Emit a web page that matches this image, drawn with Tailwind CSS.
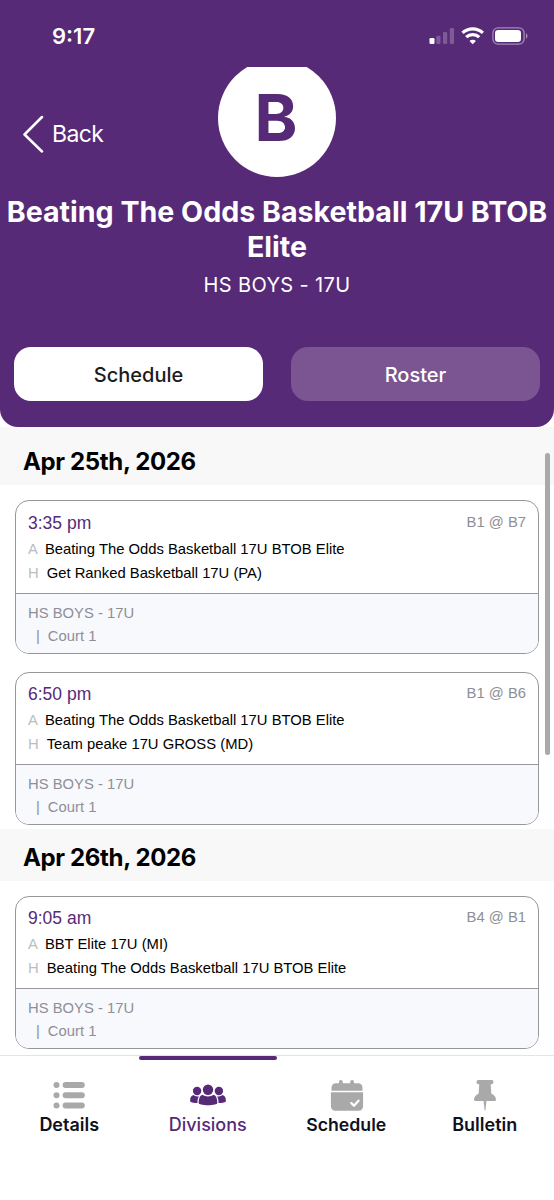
<!DOCTYPE html>
<html lang="en">
<head>
<meta charset="utf-8">
<title>Team Schedule</title>
<script src="https://cdn.jsdelivr.net/npm/@tailwindcss/browser@4"></script>
</head>
<body class="relative flex h-[1200px] w-[554px] flex-col overflow-hidden bg-white font-['Inter',sans-serif] whitespace-nowrap">

<header class="flex h-[427px] shrink-0 flex-col rounded-b-[18px] bg-[#572a78] text-white">
  <div class="flex h-[67px] shrink-0 items-center justify-between pt-[4px] pr-[26px] pl-[52px]">
    <span class="pt-px text-[22px] font-semibold">9:17</span>
    <div class="flex items-center">
      <svg class="h-[18px] w-[26px]" viewBox="0 0 26 18" fill="#fff">
        <rect x="0.5" y="11" width="5" height="6" rx="1.3"/>
        <g opacity=".23"><rect x="7.3" y="8.8" width="4.2" height="8.2" rx="1.2"/><rect x="14" y="5" width="4.2" height="12" rx="1.2"/><rect x="20.8" y="1" width="4.2" height="16" rx="1.2"/></g>
      </svg>
      <svg class="ml-1.5 h-[18px] w-6" viewBox="0 0 24 18" fill="none" stroke="#fff" stroke-width="3.2">
        <path d="M1.500 5.900a14.700 14.700 0 0 1 20.400 0"/>
        <path d="M5.200 10.200a9.300 9.300 0 0 1 13 0"/>
        <path d="M11.700 17.200l-3.200-3.200a4.600 4.600 0 0 1 6.400 0z" fill="#fff" stroke="none"/>
      </svg>
      <svg class="ml-[7px] h-[18px] w-9" viewBox="0 0 36 18" fill="none">
        <rect x=".9" y=".9" width="31.2" height="16.2" rx="5" stroke="#fff" stroke-opacity=".45" stroke-width="1.3"/>
        <rect x="3" y="3" width="26" height="12" rx="3.2" fill="#fff"/>
        <path d="M34 6.3c1.900.7 1.900 4.700 0 5.400z" fill="#fff" fill-opacity=".5"/>
      </svg>
    </div>
  </div>
  <div class="grid h-[111px] shrink-0 grid-cols-[218px_118px_218px] overflow-hidden">
    <div class="flex h-[133px] items-center pl-[22px]">
      <svg class="h-[38px] w-[22px]" viewBox="0 0 22 38" fill="none" stroke="#fff" stroke-width="2.5" stroke-linecap="round" stroke-linejoin="round"><path d="M20 2L2.5 19.5L20 36.500"/></svg>
      <span class="ml-2 pt-0.5 text-[23px] tracking-[-0.6px]">Back</span>
    </div>
    <div class="-mt-2 flex size-[118px] items-center justify-center rounded-full bg-white pr-0.5 text-[65px] font-bold text-[#572a78]">B</div>
  </div>
  <h1 class="mt-[16px] text-center text-[28.6px] leading-[35px] font-bold">Beating The Odds Basketball 17U BTOB<br>Elite</h1>
  <p class="mt-[7px] text-center text-[20px] leading-7 tracking-[.35px]">HS BOYS - 17U</p>
  <div class="mt-[48px] flex gap-7 px-3.5 text-[20px] font-medium">
    <div class="flex h-[54px] flex-1 items-center justify-center rounded-[17px] bg-white pt-0.5 text-[#1b1b1f]">Schedule</div>
    <div class="flex h-[54px] flex-1 items-center justify-center rounded-[17px] bg-[#7b5592] pt-0.5 text-white">Roster</div>
  </div>
</header>

<main class="h-[628px] shrink-0 overflow-hidden">
  <h2 class="flex h-[58px] items-center bg-[#f8f8f8] pt-3 pl-[23px] text-[24px] font-bold tracking-[-0.35px] text-black">Apr 25th, 2026</h2>

  <section class="flex flex-col gap-[18px] px-[15px] pt-[15px] pb-1 font-['Liberation_Sans',sans-serif] text-[14.8px]">
    <article class="h-[154px] overflow-hidden rounded-[14px] border border-[#96979b]">
      <div class="h-[93px] border-b border-[#96979b] px-3 pt-[9px]">
        <div class="flex h-[27px] justify-between text-[17.5px] leading-[26px] text-[#572a78]"><span>3:35 pm</span><span class="text-[14.8px] leading-6 text-[#8e8f96]">B1 @ B7</span></div>
        <div class="flex h-6 items-center"><span class="mr-[7px] text-[#bcbcbe]">A</span><span class="text-black">Beating The Odds Basketball 17U BTOB Elite</span></div>
        <div class="flex h-6 items-center"><span class="mr-2 text-[#bcbcbe]">H</span><span class="text-black">Get Ranked Basketball 17U (PA)</span></div>
      </div>
      <div class="h-full bg-[#f8f9fd] px-3 pt-2 leading-[23px] text-[#8e8f96]"><p>HS BOYS - 17U</p><p class="flex gap-2 pl-2"><span>|</span><span>Court 1</span></p></div>
    </article>
    <article class="h-[153px] overflow-hidden rounded-[14px] border border-[#96979b]">
      <div class="h-[92px] border-b border-[#96979b] px-3 pt-2">
        <div class="flex h-[27px] justify-between text-[17.5px] leading-[26px] text-[#572a78]"><span>6:50 pm</span><span class="text-[14.8px] leading-6 text-[#8e8f96]">B1 @ B6</span></div>
        <div class="flex h-6 items-center"><span class="mr-[7px] text-[#bcbcbe]">A</span><span class="text-black">Beating The Odds Basketball 17U BTOB Elite</span></div>
        <div class="flex h-6 items-center"><span class="mr-2 text-[#bcbcbe]">H</span><span class="text-black">Team peake 17U GROSS (MD)</span></div>
      </div>
      <div class="h-full bg-[#f8f9fd] px-3 pt-2 leading-[23px] text-[#8e8f96]"><p>HS BOYS - 17U</p><p class="flex gap-2 pl-2"><span>|</span><span>Court 1</span></p></div>
    </article>
  </section>

  <h2 class="flex h-[52px] items-center bg-[#f8f8f8] pt-1.5 pl-[23px] text-[24px] font-bold tracking-[-0.35px] text-black">Apr 26th, 2026</h2>

  <section class="px-[15px] pt-[15px] font-['Liberation_Sans',sans-serif] text-[14.8px]">
    <article class="h-[153px] overflow-hidden rounded-[14px] border border-[#96979b]">
      <div class="h-[92px] border-b border-[#96979b] px-3 pt-2">
        <div class="flex h-[27px] justify-between text-[17.5px] leading-[26px] text-[#572a78]"><span>9:05 am</span><span class="text-[14.8px] leading-6 text-[#8e8f96]">B4 @ B1</span></div>
        <div class="flex h-6 items-center"><span class="mr-[7px] text-[#bcbcbe]">A</span><span class="text-black">BBT Elite 17U (MI)</span></div>
        <div class="flex h-6 items-center"><span class="mr-2 text-[#bcbcbe]">H</span><span class="text-black">Beating The Odds Basketball 17U BTOB Elite</span></div>
      </div>
      <div class="h-full bg-[#f8f9fd] px-3 pt-2 leading-[23px] text-[#8e8f96]"><p>HS BOYS - 17U</p><p class="flex gap-2 pl-2"><span>|</span><span>Court 1</span></p></div>
    </article>
  </section>
</main>

<div class="absolute top-[453px] right-[4.5px] h-[302px] w-[4.5px] rounded-full bg-[#a9a9a9]"></div>

<nav class="grid flex-1 grid-cols-4 border-t border-[#e4e4e6] bg-white text-[18px] font-semibold text-[#0f1020]">
  <div class="flex flex-col items-center pt-6">
    <svg class="h-[30px] w-8" viewBox="0 0 32 30" fill="#a9a9a9"><circle cx="3.500" cy="5" r="3"/><circle cx="3.500" cy="15.300" r="3"/><circle cx="3.500" cy="25.600" r="3"/><rect x="9.600" y="2" width="22.200" height="6" rx="3"/><rect x="9.600" y="12.300" width="22.200" height="6" rx="3"/><rect x="9.600" y="22.600" width="22.200" height="6" rx="3"/></svg>
    <span class="mt-px leading-7">Details</span>
  </div>
  <div class="relative flex flex-col items-center pt-6 font-medium text-[#572a78]">
    <div class="absolute inset-x-0 top-0 h-1 rounded-full bg-[#572a78]"></div>
    <svg class="h-[30px] w-9" viewBox="0 0 36 30" fill="#572a78">
      <circle cx="18" cy="9.700" r="5.200"/><circle cx="7.100" cy="11" r="4.200"/><circle cx="28.900" cy="11" r="4.200"/>
      <path d="M12.400 14.800C14 16.200 16 16.400 18 16.400s4-.2 5.600-1.600c2.500.8 3.700 3.900 3.700 8.200 0 1.300-3.900 2.200-9.300 2.200s-9.300-.9-9.300-2.200c0-4.300 1.200-7.400 3.700-8.200z"/>
      <path d="M3.400 15.100c1.400 1.300 3.700 1.600 5.600 1.100-1.200 1.800-1.600 4.100-1.500 6.800-2.900 0-6-.4-7.200-1.300-.6-3.100.6-6 3.100-6.600zM32.600 15.100c-1.400 1.300-3.700 1.600-5.600 1.100 1.200 1.800 1.600 4.100 1.500 6.800 2.900 0 6-.4 7.200-1.300.6-3.100-.6-6-3.100-6.600z"/>
    </svg>
    <span class="mt-px leading-7">Divisions</span>
  </div>
  <div class="flex flex-col items-center pt-6">
    <svg class="ml-[2px] h-[31px] w-[34px]" viewBox="0 0 34 31" fill="#a9a9a9">
      <path d="M1.500 10.800V8c0-3 1.600-4.700 4.600-4.700H9V1.900a1.900 1.900 0 0 1 3.800 0v1.400h7.400V1.900a1.900 1.900 0 0 1 3.800 0v1.400h3.900c3 0 4.600 1.700 4.600 4.700v2.800z"/>
      <path d="M.9 12.300h32.200V26c0 3-1.700 4.800-4.700 4.800H5.600c-3 0-4.700-1.800-4.700-4.800z"/>
      <path d="M21.300 23.100l2.700 2.600 4.500-5" fill="none" stroke="#fff" stroke-width="2.300" stroke-linecap="round" stroke-linejoin="round"/>
    </svg>
    <span class="text-[17.700px] leading-7">Schedule</span>
  </div>
  <div class="flex flex-col items-center pt-6">
    <svg class="h-[31px] w-6" viewBox="0 0 24 31" fill="#a9a9a9">
      <path d="M5.400 0h13.200c1.300 0 1.900.8 1.900 2s-.7 2.300-1.900 2.300h-.9l.7 9.400c2.900 1.100 4.600 3.400 4.600 6 0 .8-.5 1.200-1.300 1.200H2.300c-.8 0-1.300-.4-1.300-1.200 0-2.600 1.700-4.900 4.600-6l.7-9.400h-.9c-1.200 0-1.900-1.100-1.900-2.300s.6-2 1.900-2z"/>
      <path d="M10.500 20.500h3L12.400 30.500h-.8z"/>
    </svg>
    <span class="leading-7">Bulletin</span>
  </div>
</nav>
</body>
</html>
